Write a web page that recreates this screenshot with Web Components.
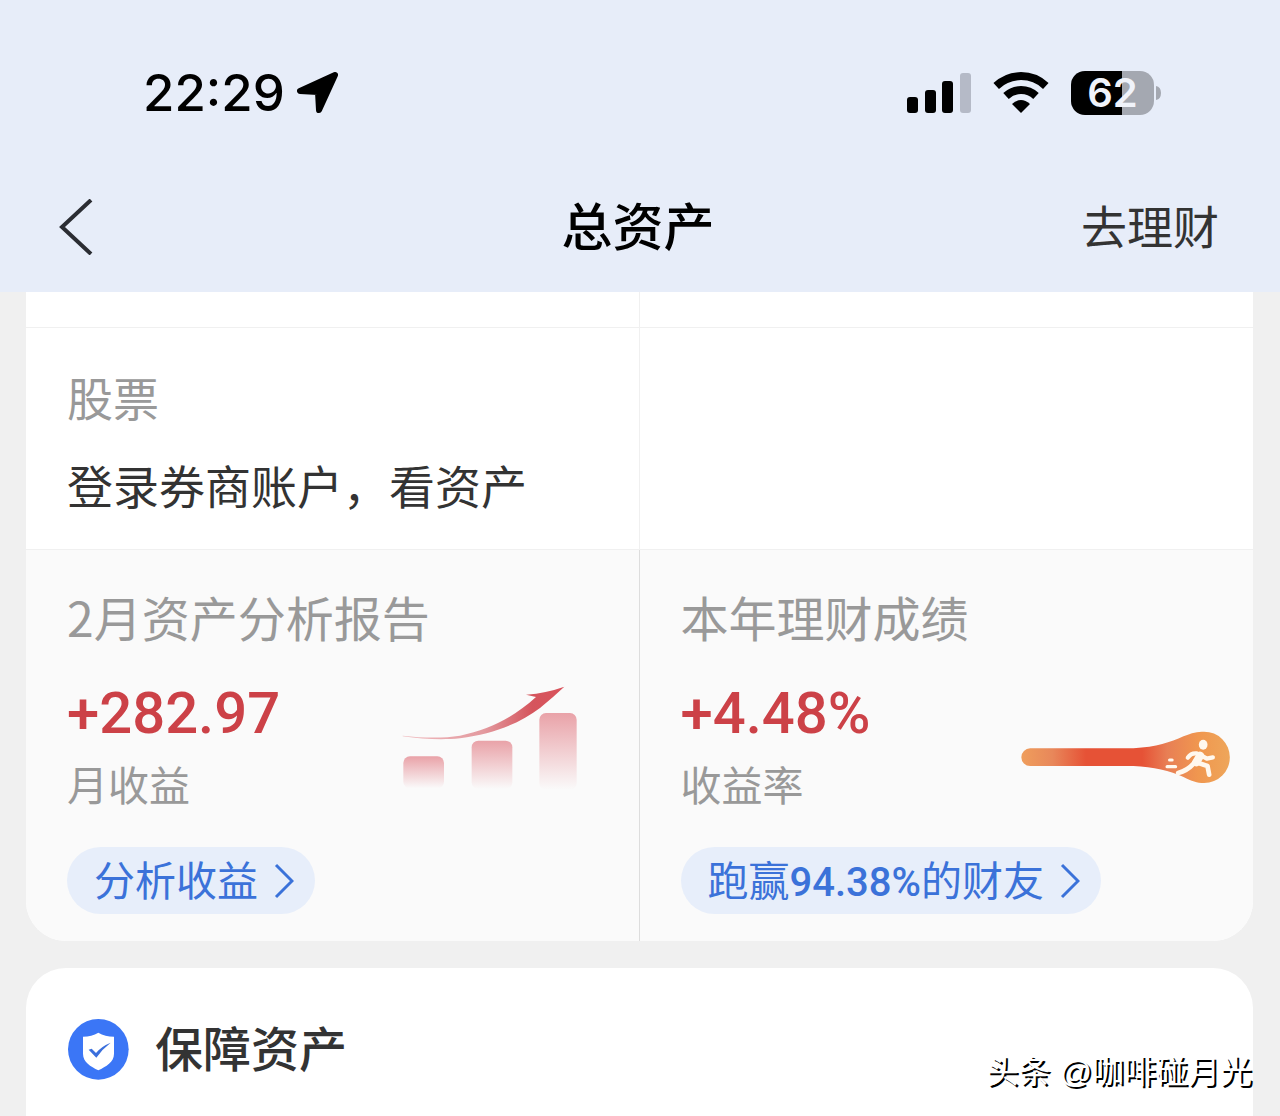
<!DOCTYPE html>
<html lang="zh-CN">
<head>
<meta charset="utf-8">
<meta name="viewport" content="width=device-width, initial-scale=1">
<title>总资产</title>
<style>
    body {
        margin: 0;
        background: #f0f0f0;
        font-family: "Noto Sans CJK SC", sans-serif;
        color: #333;
    }
</style>
</head>
<body>

<asset-page>
    <status-bar slot="header" time="22:29" battery="62"></status-bar>
    <nav-bar slot="header" action="去理财">总资产</nav-bar>

    <asset-grid>
        <asset-cell></asset-cell>
        <asset-cell></asset-cell>
        <asset-cell label="股票">登录券商账户，看资产</asset-cell>
        <asset-cell></asset-cell>
        <report-cell heading="2月资产分析报告" value="+282.97" caption="月收益">
            <growth-art slot="art"></growth-art>
            <pill-link slot="link">分析收益</pill-link>
        </report-cell>
        <report-cell heading="本年理财成绩" value="+4.48%" caption="收益率">
            <runner-art slot="art"></runner-art>
            <pill-link slot="link">跑赢<b>94.38%</b>的财友</pill-link>
        </report-cell>
    </asset-grid>

    <section-card>保障资产</section-card>
    <water-mark slot="mark">头条 @咖啡碰月光</water-mark>
</asset-page>

<script>
// shared base: puts the template of the class into its shadow root
class BaseElement extends HTMLElement {
    connectedCallback() {
        if (this.shadowRoot) return;
        this.attachShadow({ mode: 'open' });
        this.shadowRoot.innerHTML = this.template();
    }
}

class AssetPage extends BaseElement {
    template() {
        return `
        <style>
            :host {
                display: flex;
                flex-direction: column;
                min-height: 100vh;
                position: relative;
            }
            header {
                background: #e7edf9;
                padding-top: 61px;
            }
            main {
                flex: 1;
                display: flex;
                flex-direction: column;
                gap: 27px;
                padding: 0 27px 0 26px;
            }
        </style>
        <header><slot name="header"></slot></header>
        <main><slot></slot></main>
        <slot name="mark"></slot>`;
    }
}

class StatusBar extends BaseElement {
    template() {
        return `
        <style>
            :host {
                display: flex;
                justify-content: space-between;
                align-items: center;
                height: 64px;
                padding: 0 118px 0 143px;
                color: #000;
                font-family: Inter, sans-serif;
            }
            div {
                display: flex;
                align-items: center;
            }
            .left {
                gap: 12px;
            }
            .right {
                gap: 22px;
            }
            time {
                font-size: 51px;
                font-weight: 500;
                line-height: 64px;
            }
            svg {
                display: block;
            }
            .battery {
                gap: 2px;
            }
            .level {
                width: 83px;
                height: 44px;
                justify-content: center;
                border-radius: 14px;
                background: linear-gradient(to right, #000 ${this.getAttribute('battery')}%, #a4a8b1 0);
                color: #f0f3fa;
                font-size: 40px;
                font-weight: 600;
                line-height: 44px;
            }
        </style>
        <div class="left">
            <time>${this.getAttribute('time')}</time>
            <svg width="41" height="42" viewBox="0 0 41 42" aria-hidden="true">
                <path d="M38 3 L3 19 L21 20 L22 38 Z" stroke="#000" stroke-width="6" stroke-linejoin="round"/>
            </svg>
        </div>
        <div class="right">
            <svg width="64" height="42" viewBox="0 0 64 42" aria-hidden="true">
                <rect x="0" y="25" width="11" height="16" rx="3"/>
                <rect x="18" y="18" width="11" height="23" rx="3"/>
                <rect x="35" y="9" width="11" height="32" rx="3"/>
                <rect x="53" y="1" width="11" height="40" rx="3" fill="#b5bac7"/>
            </svg>
            <svg width="56" height="42" viewBox="0 0 56 42" aria-hidden="true">
                <g fill="none" stroke="#000" stroke-width="8">
                    <path d="M3.200 14 A36 36 0 0 1 52.800 14"/>
                    <path d="M13 24 A22 22 0 0 1 43 24"/>
                </g>
                <path d="M19 32 Q28 24 37 32 L28 41 Z"/>
            </svg>
            <div class="battery">
                <div class="level">${this.getAttribute('battery')}</div>
                <svg width="6" height="14" viewBox="0 0 6 14" aria-hidden="true">
                    <path d="M0 0 Q5 1 5 7 Q5 13 0 14 Z" fill="#a4a8b1"/>
                </svg>
            </div>
        </div>`;
    }
}

class NavBar extends BaseElement {
    template() {
        return `
        <style>
            :host {
                display: grid;
                grid-template-columns: 1fr auto 1fr;
                align-items: center;
                height: 130px;
                padding: 0 61px 0 57px;
                margin-top: 37px;
            }
            button {
                justify-self: start;
                padding: 0;
                border: 0;
                background: none;
                cursor: pointer;
            }
            svg {
                display: block;
            }
            h1, a {
                padding-bottom: 6px;
                line-height: 72px;
            }
            h1 {
                margin: 0;
                font-size: 51px;
                font-weight: 500;
                color: #000;
            }
            a {
                justify-self: end;
                font-size: 46px;
                color: #333;
                text-decoration: none;
            }
        </style>
        <button type="button" aria-label="返回">
            <svg width="36" height="56" viewBox="0 0 36 56">
                <path d="M34 1 L5 28 L34 55" fill="none" stroke="#2b2d33" stroke-width="4"/>
            </svg>
        </button>
        <h1><slot></slot></h1>
        <a href="#">${this.getAttribute('action')}</a>`;
    }
}

class AssetGrid extends BaseElement {
    template() {
        return `
        <style>
            :host {
                display: grid;
                grid-template-columns: 1fr 1fr;
                grid-template-rows: 36px 222px auto;
                background: #fff;
                border-radius: 0 0 40px 40px;
                overflow: hidden;
            }
        </style>
        <slot></slot>`;
    }
}

class AssetCell extends BaseElement {
    template() {
        const label = this.getAttribute('label');
        return `
        <style>
            :host {
                display: block;
                box-sizing: border-box;
                border-bottom: 1px solid #f0f0f0;
                font-size: 46px;
                line-height: 64px;
            }
            :host(:nth-child(odd)) {
                border-right: 1px solid #f0f0f0;
            }
            .text {
                display: flex;
                flex-direction: column;
                gap: 24px;
                padding: 36px 42px 0 41px;
            }
            .label {
                color: #999;
            }
        </style>
        ${label ? `<div class="text"><span class="label">${label}</span><span><slot></slot></span></div>` : ''}`;
    }
}

class ReportCell extends BaseElement {
    template() {
        return `
        <style>
            :host {
                display: block;
                background: #fafafa;
                padding: 34px 22px 27px 41px;
            }
            :host(:nth-child(odd)) {
                border-right: 1px solid #ddd;
            }
            h2 {
                margin: 0 0 29px;
                font-size: 48px;
                font-weight: 400;
                line-height: 64px;
                color: #999;
            }
            .row {
                display: flex;
                justify-content: space-between;
                align-items: center;
                margin-bottom: 36px;
            }
            .value {
                font-family: Roboto, sans-serif;
                font-size: 58px;
                font-weight: 500;
                line-height: 72px;
                color: #cc4147;
            }
            .caption {
                margin-top: 6px;
                font-size: 41px;
                line-height: 56px;
                color: #999;
            }
        </style>
        <h2>${this.getAttribute('heading')}</h2>
        <div class="row">
            <div>
                <div class="value">${this.getAttribute('value')}</div>
                <div class="caption">${this.getAttribute('caption')}</div>
            </div>
            <slot name="art"></slot>
        </div>
        <slot name="link"></slot>`;
    }
}

class PillLink extends BaseElement {
    template() {
        return `
        <style>
            :host {
                display: flex;
            }
            a {
                display: flex;
                align-items: center;
                gap: 16px;
                box-sizing: border-box;
                height: 67px;
                padding: 0 21px 0 27px;
                border-radius: 34px;
                background: #e7eefa;
                color: #3b72d9;
                font-size: 41px;
                line-height: 60px;
                text-decoration: none;
                white-space: nowrap;
            }
            span {
                padding-bottom: 6px;
            }
            ::slotted(b) {
                font-family: Roboto, sans-serif;
                font-size: 40px;
                font-weight: 500;
                line-height: 1;
            }
        </style>
        <a href="#">
            <span><slot></slot></span>
            <svg width="20" height="36" viewBox="0 0 20 36" aria-hidden="true">
                <path d="M2 2 L18 18 L2 34" fill="none" stroke="#3b72d9" stroke-width="3"/>
            </svg>
        </a>`;
    }
}

// three fading bars under a rising arrow
class GrowthArt extends BaseElement {
    template() {
        return `
        <style>
            :host {
                display: block;
                margin-right: 39px;
            }
            svg {
                display: block;
            }
        </style>
        <svg width="176" height="120" viewBox="66 45 528 360" aria-hidden="true">
            <defs>
                <linearGradient id="bar" x1="0" y1="0" x2="0" y2="1">
                    <stop offset="0" stop-color="#e9a2a8"/>
                    <stop offset="1" stop-color="#fafafa"/>
                </linearGradient>
                <linearGradient id="arrow" x1="0" y1="0" x2="1" y2="0">
                    <stop offset="0" stop-color="#f0bcc0"/>
                    <stop offset=".5" stop-color="#e39a9f"/>
                    <stop offset=".8" stop-color="#d5555d"/>
                    <stop offset="1" stop-color="#d9525b"/>
                </linearGradient>
            </defs>
            <g fill="url(#bar)">
                <rect x="70" y="262" width="122" height="96" rx="20"/>
                <rect x="275" y="215" width="122" height="145" rx="20"/>
                <rect x="478" y="132" width="112" height="230" rx="20"/>
            </g>
            <path fill="url(#arrow)" d="M68 200 C130 207 190 208 240 200 C330 182 400 145 468 84 L438 77 Q500 72 553 53 Q520 84 480 117 C420 163 340 195 240 208 C190 213 130 211 68 202 Z"/>
        </svg>`;
    }
}

// progress track that ends in a drop with a runner
class RunnerArt extends BaseElement {
    template() {
        return `
        <style>
            :host {
                display: block;
            }
            svg {
                display: block;
            }
        </style>
        <svg width="211" height="80" viewBox="60 -15 632 240" aria-hidden="true">
            <defs>
                <linearGradient id="track" x1="0" y1="0" x2="1" y2="0">
                    <stop offset="0" stop-color="#ef9e5c"/>
                    <stop offset=".15" stop-color="#e8875a"/>
                    <stop offset=".31" stop-color="#e65236"/>
                    <stop offset=".58" stop-color="#e65236"/>
                    <stop offset=".7" stop-color="#e87f55"/>
                    <stop offset=".85" stop-color="#f0974f"/>
                    <stop offset="1" stop-color="#eea65a"/>
                </linearGradient>
            </defs>
            <path fill="url(#track)" d="M90 118 H400 C470 114 510 100 550 82 C575 71 592 68 612 68 A77 77 0 0 1 612 222 C590 222 575 217 550 204 C510 185 460 174 400 171 H90 A26 26 0 0 1 90 118 Z"/>
            <g fill="none" stroke="#fff8ee" stroke-linecap="round" stroke-linejoin="round">
                <path d="M563 146 Q572 132 588 133 L608 142 L620 149 L638 145" stroke-width="13"/>
                <path d="M597 142 L578 166 Q562 184 534 192" stroke-width="14"/>
                <path d="M588 160 L622 171 L627 197" stroke-width="14"/>
                <path d="M600 140 L588 160" stroke-width="24"/>
                <path d="M501 173 H526" stroke-width="10"/>
                <path d="M508 153 H516" stroke-width="9"/>
            </g>
            <ellipse cx="609" cy="107" rx="13" ry="15" fill="#fff8ee"/>
        </svg>`;
    }
}

class SectionCard extends BaseElement {
    template() {
        return `
        <style>
            :host {
                display: block;
                flex: 1;
                padding: 42px 42px 0;
                background: #fff;
                border-radius: 40px 40px 0 0;
            }
            div {
                display: flex;
                align-items: center;
                gap: 26px;
            }
            h2 {
                margin: 0;
                padding-bottom: 6px;
                font-size: 48px;
                font-weight: 500;
                line-height: 72px;
            }
        </style>
        <div>
            <svg width="61" height="61" viewBox="204 300 183 183" aria-hidden="true">
                <circle cx="295" cy="391" r="91" fill="#3b76f6"/>
                <path d="M249 353 Q275 353 295 341 Q315 353 342 353 V404 C342 430 318 442 295 454 C272 442 249 430 249 404 Z" fill="#fff"/>
                <path d="M266 392 L275 389 L288 402 Q304 382 332 371 Q307 390 289 416 Z" fill="#3b6fdc"/>
            </svg>
            <h2><slot></slot></h2>
        </div>`;
    }
}

// floats over the lower right corner of the page
class WaterMark extends BaseElement {
    template() {
        return `
        <style>
            :host {
                position: absolute;
                right: 28px;
                bottom: 20px;
                font-family: "Liberation Sans", "Noto Sans CJK SC", sans-serif;
                font-size: 32px;
                line-height: 48px;
                color: #fff;
                text-shadow: 2px 2px 0 #000;
                pointer-events: none;
            }
        </style>
        <slot></slot>`;
    }
}

customElements.define('asset-page', AssetPage);
customElements.define('status-bar', StatusBar);
customElements.define('nav-bar', NavBar);
customElements.define('asset-grid', AssetGrid);
customElements.define('asset-cell', AssetCell);
customElements.define('report-cell', ReportCell);
customElements.define('pill-link', PillLink);
customElements.define('growth-art', GrowthArt);
customElements.define('runner-art', RunnerArt);
customElements.define('section-card', SectionCard);
customElements.define('water-mark', WaterMark);
</script>
</body>
</html>
